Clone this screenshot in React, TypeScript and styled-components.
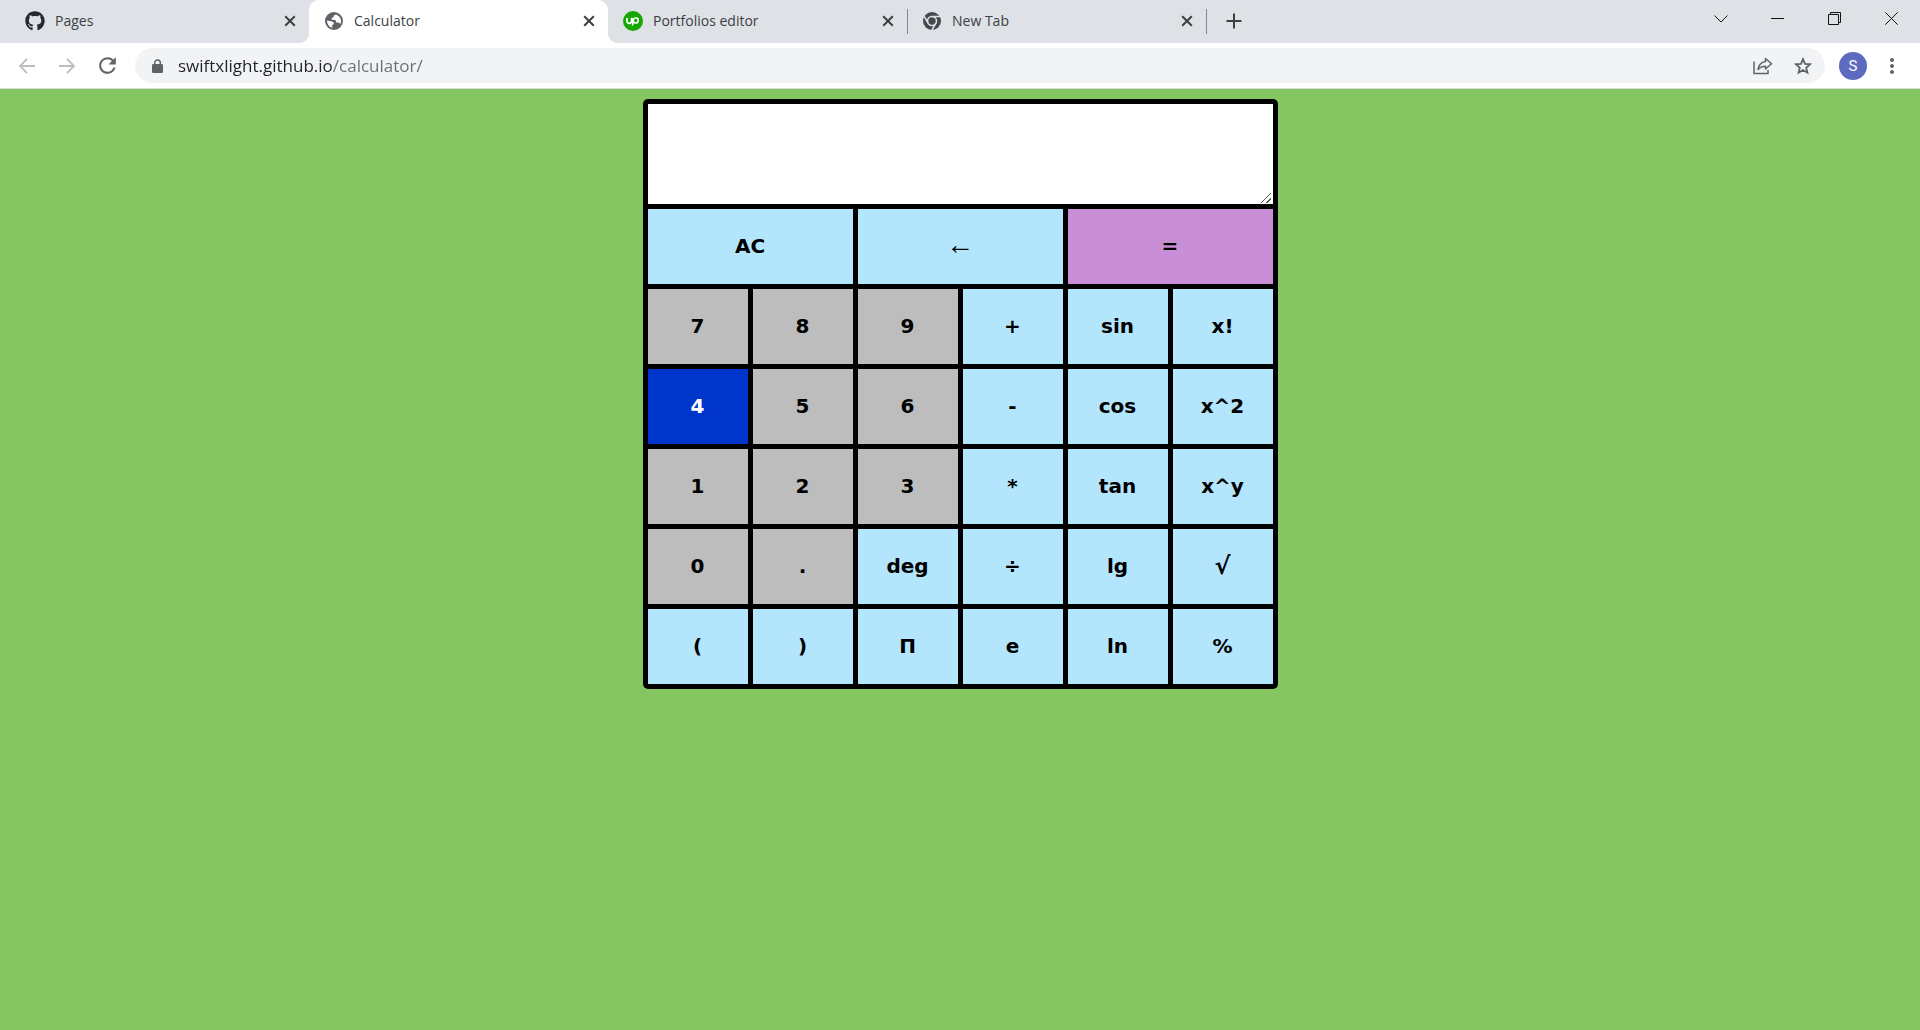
import React from "react";
import styled, { createGlobalStyle } from "styled-components";
import { FaGithub } from "react-icons/fa";
import { MdRefresh, MdMoreVert } from "react-icons/md";

const GlobalStyle = createGlobalStyle`
  *, *::before, *::after { box-sizing: border-box; }
  body { margin: 0; font-family: "Open Sans", "Noto Sans", sans-serif; }
  button { margin: 0; padding: 0; border: 0; background: none; font: inherit; color: inherit; cursor: pointer; }
`;

const Window = styled.div`
  display: flex;
  flex-direction: column;
  min-height: 100vh;
  background: #86c660;
`;

const TabStrip = styled.header`
  display: flex;
  height: 43px;
  padding-left: 10px;
  background: #dee1e6;
  color: #3c4043;
`;

const Tabs = styled.nav`
  display: flex;
  flex: 0 1 1196px;
  min-width: 0;
`;

const Tab = styled.div<{ $active?: boolean; $divider?: boolean }>`
  position: relative;
  display: flex;
  flex: 1 1 0;
  align-items: center;
  min-width: 0;
  padding: 0 12px 2px 15px;
  border-radius: 10px 10px 0 0;
  background: ${(p) => (p.$active ? "#fff" : "transparent")};

  &::before,
  &::after {
    content: ${(p) => (p.$active ? '""' : "none")};
    position: absolute;
    bottom: 0;
    width: 10px;
    height: 10px;
  }
  &::before {
    right: 100%;
    background: radial-gradient(circle at 0 0, transparent 10px, #fff 10px);
  }
  &::after {
    left: 100%;
    background: radial-gradient(circle at 100% 0, transparent 10px, #fff 10px);
  }
`;

const TabIcon = styled.span`
  display: flex;
  flex: none;
  justify-content: center;
  width: 20px;
  margin-right: 10px;
`;

const TabLink = styled.a`
  flex: 1;
  overflow: hidden;
  color: inherit;
  font-size: 14px;
  line-height: 20px;
  white-space: nowrap;
  text-decoration: none;
`;

const CloseTab = styled.button`
  display: flex;
  flex: none;
  align-items: center;
  justify-content: center;
  width: 14px;
  height: 20px;
`;

const Divider = styled.span`
  flex: none;
  align-self: center;
  width: 1px;
  height: 25px;
  margin-right: -1px;
  background: #84878b;
`;

const NewTab = styled.button`
  display: flex;
  align-items: center;
  justify-content: center;
  width: 55px;
  height: 42px;
`;

const WindowControls = styled.div`
  display: flex;
  height: 37px;
  margin-left: auto;
  color: #111;
`;

const WindowButton = styled.button`
  display: flex;
  align-items: center;
  justify-content: center;
  width: 57px;
`;

const Toolbar = styled.div`
  display: flex;
  align-items: center;
  height: 46px;
  padding: 0 8px 0 7px;
  border-bottom: 1px solid #dadce0;
  background: #fff;
  color: #5f6368;
`;

const ToolButton = styled.button<{ $muted?: boolean }>`
  display: flex;
  flex: none;
  align-items: center;
  justify-content: center;
  width: 40px;
  height: 36px;
  color: ${(p) => (p.$muted ? "#babcbe" : "#5f6368")};
`;

const Omnibox = styled.form`
  display: flex;
  flex: 1;
  align-items: center;
  height: 35px;
  margin: 0 7px 0 8px;
  padding: 0 2px 0 17px;
  border-radius: 18px;
  background: #f1f3f4;
`;

const Address = styled.input`
  flex: 1;
  min-width: 0;
  height: 35px;
  margin-left: 15px;
  padding: 0;
  border: 0;
  outline: 0;
  background: linear-gradient(90deg, #202124 154px, #6a6e73 154px);
  background-clip: text;
  -webkit-background-clip: text;
  -webkit-text-fill-color: transparent;
  color: #202124;
  font: 17px/24px "Open Sans", "Noto Sans", sans-serif;
`;

const Avatar = styled.button`
  flex: none;
  width: 28px;
  height: 28px;
  margin: 0 5px 0 7px;
  border-radius: 50%;
  background: #5c6bc0;
  color: #fff;
  font: 15px/28px Roboto, sans-serif;
`;

const Page = styled.main`
  display: flex;
  justify-content: center;
  padding: 10px;
`;

const Calculator = styled.form`
  display: grid;
  grid-template-columns: repeat(6, 100px);
  grid-template-rows: 100px;
  grid-auto-rows: 75px;
  gap: 5px;
  padding: 5px;
  border-radius: 5px;
  background: #000;
`;

const Screen = styled.textarea`
  grid-column: 1 / -1;
  width: 100%;
  height: 100%;
  padding: 8px;
  border: 0;
  outline: 0;
  background: #fff;
  font: bold 20px/28px Verdana, "DejaVu Sans", sans-serif;

  &::-webkit-resizer {
    background: linear-gradient(
        135deg,
        transparent 46%,
        #555 46% 54%,
        transparent 54% 74%,
        #555 74% 82%,
        transparent 82%
      )
      3px 4px / 10px 10px no-repeat;
  }
`;

type Tone = "digit" | "action" | "equals" | "pressed";

const tones: Record<Tone, string> = {
  digit: "#bdbdbd",
  action: "#b3e5fc",
  equals: "#c88fd7",
  pressed: "#0035cc",
};

const Key = styled.button<{ $tone: Tone; $wide?: boolean }>`
  && {
    grid-column: span ${(p) => (p.$wide ? 2 : 1)};
    padding-bottom: 1px;
    background: ${(p) => tones[p.$tone]};
    color: ${(p) => (p.$tone === "pressed" ? "#fff" : "#000")};
    font: bold 20px/24px Verdana, "DejaVu Sans", sans-serif;
  }
`;

const ArrowLabel = styled.span`
  font: 28px/24px "Liberation Serif", serif;
`;

const RootLabel = styled.span`
  font-size: 24px;
`;

const GlobeIcon = () => (
  <svg width="18" height="18" viewBox="0 0 18 18">
    <circle cx="9" cy="9" r="9" fill="#5f6368" />
    <path
      d="M11 2.400 8.800 3.600 8.600 5.200 6.600 6 6.800 7.800 10.400 8 11.400 10.400 13.600 10.600 15.400 12A7 7 0 0 0 11 2.400ZM2 8.600 6 9.200 8.800 10.600 8.600 12.300 7 13.200 7.400 15.800A7 7 0 0 1 2 8.600Z"
      fill="#fff"
    />
  </svg>
);

const UpworkIcon = () => (
  <svg width="20" height="20" viewBox="0 0 20 20">
    <circle cx="10" cy="10" r="10" fill="#14a800" />
    <path
      d="M4 7v3a2.3 2.3 0 0 0 4.600 0V7c.8 2.700 2 5 4.100 5a2.500 2.500 0 1 0-2.400-2.900L9.600 14.500"
      fill="none"
      stroke="#fff"
      strokeWidth="1.700"
    />
  </svg>
);

const ChromeIcon = () => (
  <svg width="18" height="18" viewBox="0 0 18 18">
    <circle cx="9" cy="9" r="9" fill="#44484c" />
    <circle cx="9" cy="9" r="4.500" fill="none" stroke="#dee1e6" strokeWidth="1.600" />
    <path d="M9 4.500H17M5.100 11.200 1.200 4.400M12.900 11.200 8.900 18" stroke="#dee1e6" strokeWidth="1.600" />
  </svg>
);

const CrossIcon = () => (
  <svg width="12" height="12" viewBox="0 0 12 12">
    <path d="M1.200 1.200 10.800 10.800M10.800 1.200 1.200 10.800" stroke="currentColor" strokeWidth="2" />
  </svg>
);

const ArrowIcon = ({ flip }: { flip?: boolean }) => (
  <svg width="16" height="16" viewBox="0 0 16 16">
    <path
      d={flip ? "M0 8H15M8 .8 15 8 8 15.200" : "M16 8H1M8 .8 1 8 8 15.200"}
      fill="none"
      stroke="currentColor"
      strokeWidth="1.800"
    />
  </svg>
);

const LockIcon = () => (
  <svg width="11" height="14" viewBox="0 0 11 14">
    <rect y="5" width="11" height="9" rx="1.200" fill="currentColor" />
    <path d="M2.700 5.500V3.700a2.800 2.800 0 0 1 5.600 0V5.500" fill="none" stroke="currentColor" strokeWidth="1.500" />
  </svg>
);

const ShareIcon = () => (
  <svg width="20" height="18" viewBox="0 0 20 18">
    <path d="M1 4.500V16.500H15V13" fill="none" stroke="currentColor" strokeWidth="1.500" />
    <path
      d="M12.500 1.500 18.500 6.700 12.500 12V9.200C9 9.200 6.800 10.200 5 12.500 5.600 8.500 8 5 12.500 4.400Z"
      fill="none"
      stroke="currentColor"
      strokeWidth="1.500"
      strokeLinejoin="round"
    />
  </svg>
);

const StarIcon = () => (
  <svg width="18" height="18" viewBox="0 0 18 18">
    <path
      d="M9 2.200 11 6.900 16.100 7.300 12.200 10.700 13.400 15.700 9 13 4.600 15.700 5.800 10.700 1.900 7.300 7 6.900Z"
      fill="none"
      stroke="currentColor"
      strokeWidth="1.800"
    />
  </svg>
);

const tabs = [
  { title: "Pages", icon: <FaGithub size={20} color="#24292f" /> },
  { title: "Calculator", icon: <GlobeIcon />, active: true },
  { title: "Portfolios editor", icon: <UpworkIcon />, divider: true },
  { title: "New Tab", icon: <ChromeIcon />, divider: true },
];

const keys: [string, Tone, boolean?][] = [
  ["AC", "action", true],
  ["←", "action", true],
  ["=", "equals", true],
  ["7", "digit"], ["8", "digit"], ["9", "digit"], ["+", "action"], ["sin", "action"], ["x!", "action"],
  ["4", "pressed"], ["5", "digit"], ["6", "digit"], ["-", "action"], ["cos", "action"], ["x^2", "action"],
  ["1", "digit"], ["2", "digit"], ["3", "digit"], ["*", "action"], ["tan", "action"], ["x^y", "action"],
  ["0", "digit"], [".", "digit"], ["deg", "action"], ["÷", "action"], ["lg", "action"], ["√", "action"],
  ["(", "action"], [")", "action"], ["П", "action"], ["e", "action"], ["ln", "action"], ["%", "action"],
];

const KeyLabel = ({ label }: { label: string }) => {
  if (label === "←") return <ArrowLabel>{label}</ArrowLabel>;
  if (label === "√") return <RootLabel>{label}</RootLabel>;
  return <>{label}</>;
};

export default function App() {
  return (
    <Window>
      <GlobalStyle />
      <TabStrip>
        <Tabs aria-label="Tabs">
          {tabs.map((tab) => (
            <React.Fragment key={tab.title}>
              <Tab $active={tab.active}>
                <TabIcon>{tab.icon}</TabIcon>
                <TabLink href="#">{tab.title}</TabLink>
                <CloseTab type="button" aria-label={`Close ${tab.title}`}>
                  <CrossIcon />
                </CloseTab>
              </Tab>
              {tab.divider && <Divider />}
            </React.Fragment>
          ))}
        </Tabs>
        <NewTab type="button" aria-label="New tab">
          <svg width="16" height="16" viewBox="0 0 16 16">
            <path d="M8 .5V15.500M.5 8H15.500" stroke="currentColor" strokeWidth="2" />
          </svg>
        </NewTab>
        <WindowControls>
          <WindowButton type="button" aria-label="Search tabs">
            <svg width="14" height="8" viewBox="0 0 14 8">
              <path d="M.5 .5 7 7 13.500 .5" fill="none" stroke="currentColor" />
            </svg>
          </WindowButton>
          <WindowButton type="button" aria-label="Minimize">
            <svg width="13" height="1" viewBox="0 0 13 1">
              <path d="M0 .5H13" stroke="currentColor" />
            </svg>
          </WindowButton>
          <WindowButton type="button" aria-label="Restore">
            <svg width="13" height="13" viewBox="0 0 13 13">
              <path d="M.5 2.500H10.500V12.500H.5ZM2.500 2.500V.5H12.500V10.500H10.500" fill="none" stroke="currentColor" />
            </svg>
          </WindowButton>
          <WindowButton type="button" aria-label="Close window">
            <svg width="13" height="13" viewBox="0 0 13 13">
              <path d="M.3 .3 12.700 12.700M12.700 .3 .3 12.700" stroke="currentColor" />
            </svg>
          </WindowButton>
        </WindowControls>
      </TabStrip>

      <Toolbar>
        <ToolButton type="button" aria-label="Back" $muted>
          <ArrowIcon />
        </ToolButton>
        <ToolButton type="button" aria-label="Forward" $muted>
          <ArrowIcon flip />
        </ToolButton>
        <ToolButton type="button" aria-label="Reload">
          <MdRefresh size={25} />
        </ToolButton>
        <Omnibox>
          <LockIcon />
          <Address type="text" aria-label="Address" defaultValue="swiftxlight.github.io/calculator/" />
          <ToolButton type="button" aria-label="Share">
            <ShareIcon />
          </ToolButton>
          <ToolButton type="button" aria-label="Bookmark">
            <StarIcon />
          </ToolButton>
        </Omnibox>
        <Avatar type="button" aria-label="Profile">S</Avatar>
        <ToolButton type="button" aria-label="Menu">
          <MdMoreVert size={24} />
        </ToolButton>
      </Toolbar>

      <Page>
        <Calculator>
          <Screen aria-label="Expression" />
          {keys.map(([label, tone, wide]) => (
            <Key key={label} type="button" $tone={tone} $wide={wide}>
              <KeyLabel label={label} />
            </Key>
          ))}
        </Calculator>
      </Page>
    </Window>
  );
}
